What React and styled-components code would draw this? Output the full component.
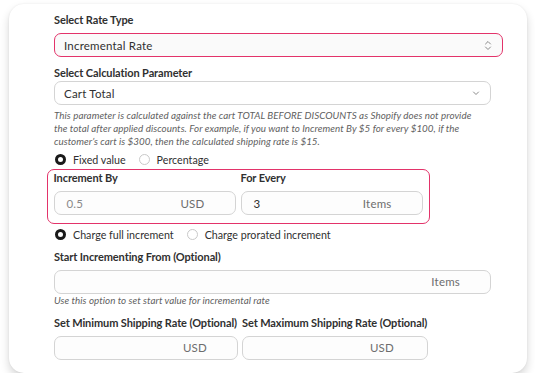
import React from 'react';
import styled, { createGlobalStyle } from 'styled-components';

const Global = createGlobalStyle`
  body {
    margin: 0;
    background: #ffffff;
    font-family: Lato, "Liberation Sans", Arial, sans-serif;
    color: #303030;
  }
`;

const Page = styled.div`
  padding: 4px 0 0 9px;
`;

const Card = styled.div`
  width: 518px;
  box-sizing: border-box;
  background: #fff;
  border-radius: 15px;
  box-shadow: 0 5px 10px rgba(0, 0, 0, 0.16), 0 0 2px rgba(0, 0, 0, 0.08);
  padding: 9px 36px 13px 45px;
`;

const Label = styled.div`
  font-size: 11px;
  font-weight: bold;
  letter-spacing: -0.1px;
  line-height: 14px;
  color: #303030;
  white-space: nowrap;
  margin-top: ${(p) => p.top || 0}px;
  margin-bottom: ${(p) => (p.bottom == null ? 6 : p.bottom)}px;
`;

const Select = styled.div`
  display: flex;
  align-items: center;
  justify-content: space-between;
  box-sizing: border-box;
  height: 24px;
  width: ${(p) => p.width || '100%'};
  padding: 0 10px 0 9px;
  font-size: 11.5px;
  letter-spacing: 0.2px;
  color: #303030;
  background: ${(p) => (p.active ? '#fafafa' : '#fff')};
  border: ${(p) => (p.active ? '1.5px solid #e3336a' : '1px solid #d4d4d4')};
  border-radius: 7px;
`;

const Help = styled.p`
  margin: ${(p) => p.top || 0}px 0 0;
  max-width: 430px;
  font-size: 9.8px;
  font-style: italic;
  letter-spacing: 0.05px;
  line-height: ${(p) => p.lh || 13}px;
  color: #616161;
`;

const RadioRow = styled.div`
  display: flex;
  align-items: center;
  gap: 12px;
  height: 14px;
  margin-top: ${(p) => p.top || 0}px;
  font-size: 10.7px;
  color: #303030;
`;

const RadioOpt = styled.label`
  display: flex;
  align-items: center;
  gap: 7px;
`;

const Dot = styled.span`
  width: 11px;
  height: 11px;
  box-sizing: border-box;
  border-radius: 50%;
  border: ${(p) => (p.on ? '3px solid #1a1a1a' : '1px solid #c9c9c9')};
  margin-left: 1px;
`;

const Group = styled.div`
  margin: 3px 0 0 -7px;
  width: 383px;
  box-sizing: border-box;
  border: 1.5px solid #e3336a;
  border-radius: 7px;
  padding: 1px 5.5px 7.5px;
`;

const Pair = styled.div`
  display: grid;
  grid-template-columns: ${(p) => p.cols};
  column-gap: ${(p) => p.gap}px;
  margin-top: ${(p) => p.top || 0}px;
`;

const Field = styled.div`
  display: flex;
  align-items: center;
  justify-content: space-between;
  box-sizing: border-box;
  height: 24px;
  padding: 0 ${(p) => p.right || 30}px 0 12px;
  font-size: 11.5px;
  letter-spacing: 0.2px;
  background: #fdfdfd;
  border: 1px solid #d4d4d4;
  border-radius: 7px;
`;

const Value = styled.span`
  color: ${(p) => (p.dim ? '#8a8a8a' : '#303030')};
`;

const Suffix = styled.span`
  color: #6d6d6d;
`;

const UpDown = () => (
  <svg width="8" height="11" viewBox="0 0 8 11" fill="none" stroke="#8a8a8a" strokeWidth="1" strokeLinecap="round" strokeLinejoin="round">
    <path d="M1.5 4 L4 1.5 L6.5 4" />
    <path d="M1.5 7 L4 9.5 L6.5 7" />
  </svg>
);

const Down = () => (
  <svg width="8" height="6" viewBox="0 0 8 6" fill="none" stroke="#8a8a8a" strokeWidth="1" strokeLinecap="round" strokeLinejoin="round">
    <path d="M1.5 2 L4 4.5 L6.5 2" />
  </svg>
);

export default function App() {
  return (
    <Page>
      <Global />
      <Card>
        <Label>Select Rate Type</Label>
        <Select active width="449px">
          <span>Incremental Rate</span>
          <UpDown />
        </Select>

        <Label top={9} bottom={1}>Select Calculation Parameter</Label>
        <Select>
          <span>Cart Total</span>
          <Down />
        </Select>
        <Help top={4}>
          This parameter is calculated against the cart TOTAL BEFORE DISCOUNTS as Shopify does not provide
          the total after applied discounts. For example, if you want to Increment By $5 for every $100, if the
          customer’s cart is $300, then the calculated shipping rate is $15.
        </Help>

        <RadioRow top={4}>
          <RadioOpt><Dot on />Fixed value</RadioOpt>
          <RadioOpt><Dot />Percentage</RadioOpt>
        </RadioRow>

        <Group>
          <Pair cols="182px 182px" gap={5}>
            <Label>Increment By</Label>
            <Label>For Every</Label>
            <Field>
              <Value dim>0.5</Value>
              <Suffix>USD</Suffix>
            </Field>
            <Field>
              <Value>3</Value>
              <Suffix>Items</Suffix>
            </Field>
          </Pair>
        </Group>

        <RadioRow top={4}>
          <RadioOpt><Dot on />Charge full increment</RadioOpt>
          <RadioOpt><Dot />Charge prorated increment</RadioOpt>
        </RadioRow>

        <Label top={8}>Start Incrementing From (Optional)</Label>
        <Field>
          <Value />
          <Suffix>Items</Suffix>
        </Field>
        <Help lh={12}>Use this option to set start value for incremental rate</Help>

        <Pair cols="184px 186px" gap={4} top={10}>
          <Label>Set Minimum Shipping Rate (Optional)</Label>
          <Label>Set Maximum Shipping Rate (Optional)</Label>
          <Field>
            <Value />
            <Suffix>USD</Suffix>
          </Field>
          <Field right={33}>
            <Value />
            <Suffix>USD</Suffix>
          </Field>
        </Pair>
      </Card>
    </Page>
  );
}
